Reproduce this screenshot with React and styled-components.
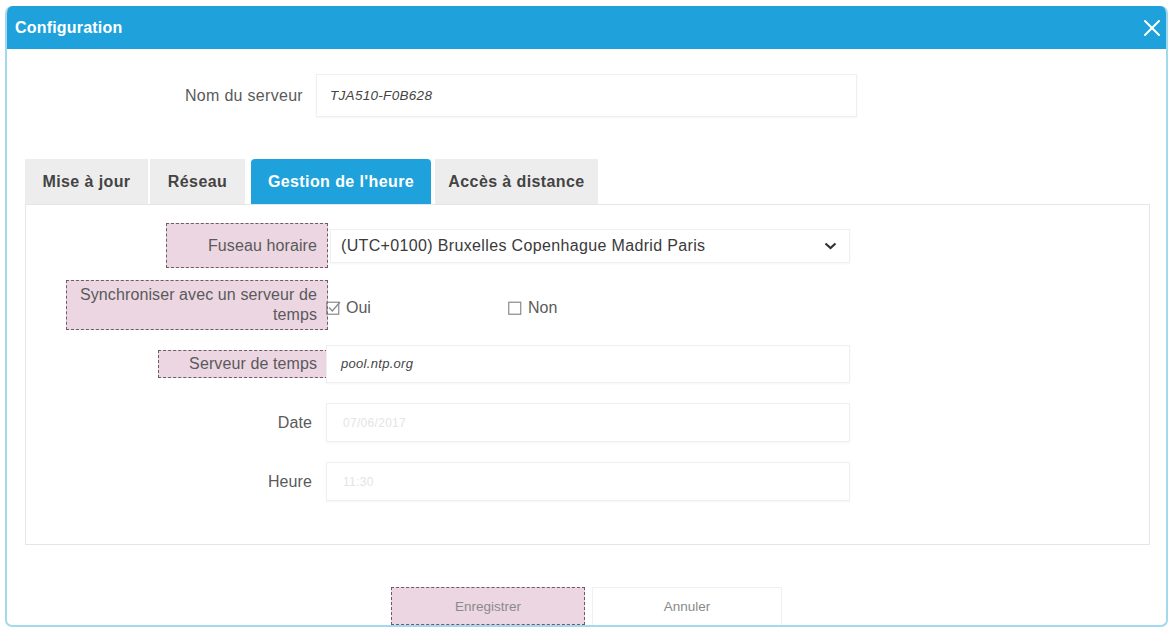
import React from "react";
import styled, { createGlobalStyle } from "styled-components";

const GlobalStyle = createGlobalStyle`
  html, body {
    margin: 0;
    padding: 0;
    background: #ffffff;
    font-family: "Liberation Sans", Arial, sans-serif;
  }
  * {
    box-sizing: border-box;
  }
`;

const StyledDialog = styled.div`
  margin: 6px 2px 2px 5px;
  width: 1163px;
  height: 621px;
  border: 2px solid #a3d9ee;
  border-top: none;
  border-radius: 7px;
  background: #ffffff;
  display: flex;
  flex-direction: column;
  overflow: hidden;
`;

const StyledHeader = styled.div`
  height: 44px;
  margin: 0 -2px;
  background: #1fa2db;
  border-radius: 7px 7px 0 0;
  display: flex;
  align-items: center;
  justify-content: space-between;
  padding: 0 5px 0 10px;
  color: #ffffff;
`;

const StyledTitle = styled.span`
  font-size: 16px;
  font-weight: bold;
  letter-spacing: 0.2px;
`;

const StyledClose = styled.button`
  border: none;
  background: none;
  padding: 0;
  width: 22px;
  height: 22px;
  display: flex;
  align-items: center;
  justify-content: center;
  cursor: pointer;
`;

const StyledBody = styled.div`
  flex: 1;
  display: flex;
  flex-direction: column;
  padding: 25px 16px 0 18px;
`;

const StyledServerRow = styled.div`
  display: flex;
  align-items: center;
  height: 43px;
`;

const StyledServerLabel = styled.label`
  width: 291px;
  padding-right: 13px;
  text-align: right;
  font-size: 16px;
  letter-spacing: 0.3px;
  color: #5a5a5a;
`;

const StyledInput = styled.div`
  width: ${(p) => p.$width || 524}px;
  height: ${(p) => p.$height || 38}px;
  border: 1px solid #efefef;
  box-shadow: 0 1px 2px rgba(0, 0, 0, 0.04);
  background: #ffffff;
  display: flex;
  align-items: center;
  padding-left: ${(p) => p.$pad || 13}px;
  font-size: ${(p) => p.$size || 13}px;
  letter-spacing: 0.3px;
  font-style: ${(p) => (p.$italic ? "italic" : "normal")};
  color: ${(p) => (p.$faint ? "#e4e4e4" : "#444444")};
`;

const StyledTabs = styled.div`
  display: flex;
  align-items: flex-end;
  margin-top: 42px;
  height: 45px;
`;

const StyledTab = styled.div`
  width: ${(p) => p.$width}px;
  margin-right: ${(p) => p.$gap || 0}px;
  height: 45px;
  display: flex;
  align-items: center;
  justify-content: center;
  font-size: 16px;
  font-weight: bold;
  letter-spacing: 0.4px;
  color: ${(p) => (p.$active ? "#ffffff" : "#444444")};
  background: ${(p) => (p.$active ? "#1fa2db" : "#ededed")};
  border-radius: ${(p) => (p.$active ? "4px 4px 0 0" : "0")};
`;

const StyledPanel = styled.div`
  border: 1px solid #e6e6e6;
  height: 341px;
  padding-top: 11px;
  display: flex;
  flex-direction: column;
`;

const StyledRow = styled.div`
  height: 59px;
  display: grid;
  grid-template-columns: 300px 524px;
  align-items: center;
`;

const StyledLabelCell = styled.div`
  display: flex;
  justify-content: flex-end;
  align-items: center;
`;

const StyledLabel = styled.div`
  width: ${(p) => (p.$width ? `${p.$width}px` : "auto")};
  height: ${(p) => (p.$height ? `${p.$height}px` : "auto")};
  margin-right: ${(p) => (p.$highlight ? "-2px" : "14px")};
  padding: ${(p) => (p.$highlight ? "0 10px 0 4px" : "0")};
  display: flex;
  align-items: center;
  justify-content: flex-end;
  text-align: right;
  font-size: 16px;
  letter-spacing: 0.1px;
  line-height: 20px;
  color: #5a5a5a;
  background: ${(p) => (p.$highlight ? "#ecd6e2" : "transparent")};
  border: ${(p) => (p.$highlight ? "1.5px dashed #6e5a68" : "none")};
`;

const StyledSelect = styled.div`
  margin-left: 4px;
  width: 520px;
  height: 34px;
  border: 1px solid #efefef;
  box-shadow: 0 1px 2px rgba(0, 0, 0, 0.04);
  display: flex;
  align-items: center;
  justify-content: space-between;
  padding: 0 12px 0 10px;
  font-size: 16px;
  letter-spacing: 0.35px;
  color: #3a3a3a;
`;

const StyledChecks = styled.div`
  display: flex;
  align-items: center;
  padding-top: 6px;
`;

const StyledCheck = styled.label`
  width: ${(p) => p.$width || 180}px;
  display: flex;
  align-items: center;
  gap: 5px;
  font-size: 16px;
  color: #5a5a5a;
`;

const StyledFooter = styled.div`
  display: flex;
  justify-content: center;
  gap: 7px;
  margin-top: 42px;
  padding-right: 2px;
`;

const StyledButton = styled.button`
  width: ${(p) => (p.$primary ? 194 : 190)}px;
  height: 38px;
  font-family: "Liberation Sans", Arial, sans-serif;
  font-size: 13.5px;
  color: #8a8a8a;
  background: ${(p) => (p.$primary ? "#ecd6e2" : "#ffffff")};
  border: ${(p) => (p.$primary ? "1.5px dashed #6e5a68" : "1px solid #f0f0f0")};
  border-bottom: ${(p) => (p.$primary ? "1.5px dashed #6e5a68" : "none")};
`;

const CloseIcon = () => (
  <svg width="18" height="18" viewBox="0 0 18 18">
    <path d="M2 2 L16 16 M16 2 L2 16" stroke="#ffffff" strokeWidth="2" strokeLinecap="round" />
  </svg>
);

const Chevron = () => (
  <svg width="13" height="8" viewBox="0 0 13 8">
    <path d="M1.5 1.5 L6.5 6 L11.5 1.5" fill="none" stroke="#333333" strokeWidth="2.2" />
  </svg>
);

const CheckBox = ({ checked }) => (
  <svg width="15" height="14" viewBox="0 0 15 14">
    <rect x="0.75" y="1.25" width="12" height="12" fill="none" stroke="#8a8a8a" strokeWidth="1.2" />
    {checked && (
      <path d="M3 6.5 L6.3 10 L14 1" fill="none" stroke="#8a8a8a" strokeWidth="1.3" />
    )}
  </svg>
);

const tabs = [
  { label: "Mise à jour", width: 123, gap: 2 },
  { label: "Réseau", width: 95, gap: 6 },
  { label: "Gestion de l'heure", width: 180, gap: 4, active: true },
  { label: "Accès à distance", width: 163 },
];

const App = () => {
  return (
    <>
      <GlobalStyle />
      <StyledDialog>
        <StyledHeader>
          <StyledTitle>Configuration</StyledTitle>
          <StyledClose aria-label="Fermer">
            <CloseIcon />
          </StyledClose>
        </StyledHeader>
        <StyledBody>
          <StyledServerRow>
            <StyledServerLabel>Nom du serveur</StyledServerLabel>
            <StyledInput $width={541} $height={43} $italic $size={13.5}>
              TJA510-F0B628
            </StyledInput>
          </StyledServerRow>

          <StyledTabs>
            {tabs.map((t) => (
              <StyledTab key={t.label} $width={t.width} $gap={t.gap} $active={t.active}>
                {t.label}
              </StyledTab>
            ))}
          </StyledTabs>

          <StyledPanel>
            <StyledRow>
              <StyledLabelCell>
                <StyledLabel $highlight $width={162} $height={45}>
                  Fuseau horaire
                </StyledLabel>
              </StyledLabelCell>
              <StyledSelect>
                <span>(UTC+0100) Bruxelles Copenhague Madrid Paris</span>
                <Chevron />
              </StyledSelect>
            </StyledRow>

            <StyledRow>
              <StyledLabelCell>
                <StyledLabel $highlight $width={262} $height={50}>
                  Synchroniser avec un serveur de temps
                </StyledLabel>
              </StyledLabelCell>
              <StyledChecks>
                <StyledCheck $width={182}>
                  <CheckBox checked />
                  Oui
                </StyledCheck>
                <StyledCheck>
                  <CheckBox />
                  Non
                </StyledCheck>
              </StyledChecks>
            </StyledRow>

            <StyledRow>
              <StyledLabelCell>
                <StyledLabel $highlight $width={170} $height={28}>
                  Serveur de temps
                </StyledLabel>
              </StyledLabelCell>
              <StyledInput $height={38} $italic $size={13} $pad={14}>
                pool.ntp.org
              </StyledInput>
            </StyledRow>

            <StyledRow>
              <StyledLabelCell>
                <StyledLabel>Date</StyledLabel>
              </StyledLabelCell>
              <StyledInput $height={39} $faint $size={12} $pad={16}>
                07/06/2017
              </StyledInput>
            </StyledRow>

            <StyledRow>
              <StyledLabelCell>
                <StyledLabel>Heure</StyledLabel>
              </StyledLabelCell>
              <StyledInput $height={39} $faint $size={12} $pad={16}>
                11:30
              </StyledInput>
            </StyledRow>
          </StyledPanel>

          <StyledFooter>
            <StyledButton $primary>Enregistrer</StyledButton>
            <StyledButton>Annuler</StyledButton>
          </StyledFooter>
        </StyledBody>
      </StyledDialog>
    </>
  );
};

export default App;
